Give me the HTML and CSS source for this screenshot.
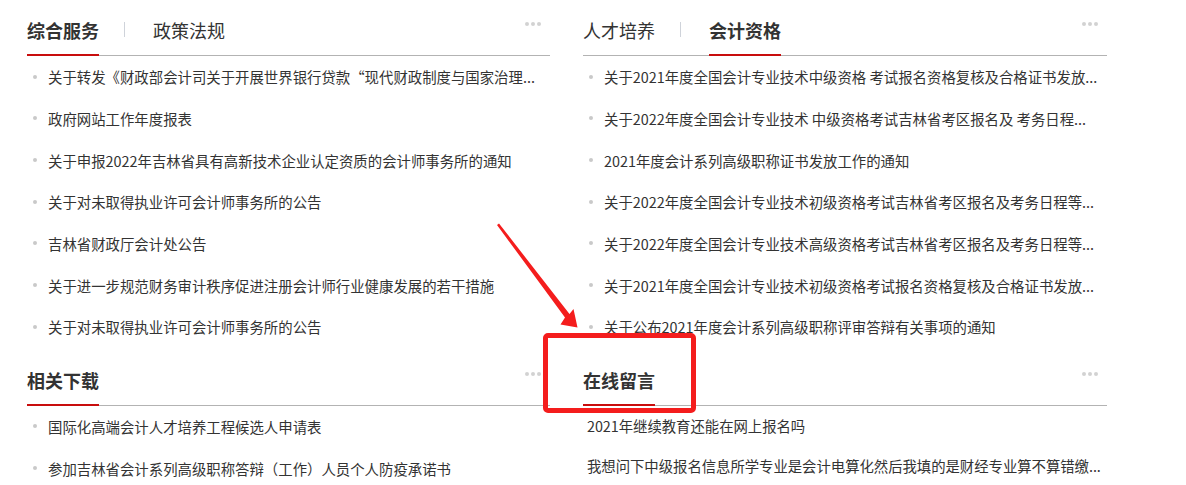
FILE: index.html
```html
<!DOCTYPE html>
<html lang="zh-CN">
<head>
<meta charset="utf-8">
<title>会计</title>
<link rel="stylesheet" href="styles.css">
</head>
<body>
<div class="page">
  <div class="grid">
    <section class="box">
      <div class="head">
        <span class="tab active">综合服务</span>
        <span class="sep"></span>
        <span class="tab">政策法规</span>
        <span class="more"><i></i><i></i><i></i></span>
      </div>
      <ul class="list">
        <li>关于转发《财政部会计司关于开展世界银行贷款“现代财政制度与国家治理...</li>
        <li>政府网站工作年度报表</li>
        <li>关于申报2022年吉林省具有高新技术企业认定资质的会计师事务所的通知</li>
        <li>关于对未取得执业许可会计师事务所的公告</li>
        <li>吉林省财政厅会计处公告</li>
        <li>关于进一步规范财务审计秩序促进注册会计师行业健康发展的若干措施</li>
        <li>关于对未取得执业许可会计师事务所的公告</li>
      </ul>
    </section>
    <section class="box">
      <div class="head">
        <span class="tab">人才培养</span>
        <span class="sep"></span>
        <span class="tab active">会计资格</span>
        <span class="more"><i></i><i></i><i></i></span>
      </div>
      <ul class="list">
        <li>关于2021年度全国会计专业技术中级资格 考试报名资格复核及合格证书发放...</li>
        <li>关于2022年度全国会计专业技术 中级资格考试吉林省考区报名及 考务日程...</li>
        <li>2021年度会计系列高级职称证书发放工作的通知</li>
        <li>关于2022年度全国会计专业技术初级资格考试吉林省考区报名及考务日程等...</li>
        <li>关于2022年度全国会计专业技术高级资格考试吉林省考区报名及考务日程等...</li>
        <li>关于2021年度全国会计专业技术初级资格考试报名资格复核及合格证书发放...</li>
        <li>关于公布2021年度会计系列高级职称评审答辩有关事项的通知</li>
      </ul>
    </section>
    <section class="box">
      <div class="head">
        <span class="tab active">相关下载</span>
        <span class="more"><i></i><i></i><i></i></span>
      </div>
      <ul class="list">
        <li>国际化高端会计人才培养工程候选人申请表</li>
        <li>参加吉林省会计系列高级职称答辩（工作）人员个人防疫承诺书</li>
      </ul>
    </section>
    <section class="box">
      <div class="head">
        <span class="tab active">在线留言</span>
        <span class="more"><i></i><i></i><i></i></span>
      </div>
      <ul class="list plain">
        <li>2021年继续教育还能在网上报名吗</li>
        <li>我想问下中级报名信息所学专业是会计电算化然后我填的是财经专业算不算错缴...</li>
      </ul>
    </section>
  </div>

  <svg class="arrow" width="1186" height="485" viewBox="0 0 1186 485" aria-hidden="true">
    <polygon points="497,225 499,223.5 569.5,314 573.5,309 577.5,327.5 560.5,324.5 565,317.5" fill="#f41d1d"/>
  </svg>
  <div class="mark"></div>
</div>
</body>
</html>
```

FILE: styles.css
```css
html, body {
  margin: 0;
  padding: 0;
  background: #fff;
}

body {
  font-family: "Noto Sans CJK SC", "Noto Sans", sans-serif;
  color: #333;
}

.page {
  position: relative;
  width: 1186px;
  height: 485px;
  overflow: hidden;
}

.grid {
  display: grid;
  grid-template-columns: 523px 524px;
  column-gap: 33px;
  row-gap: 20px;
  padding: 18px 0 0 27px;
}

.head {
  display: flex;
  align-items: flex-start;
  border-bottom: 1px solid #b3b3b3;
}

.tab {
  font-size: 18px;
  line-height: 24px;
  padding-bottom: 12px;
  border-bottom: 2px solid transparent;
  margin-bottom: -1px;
  color: #333;
  white-space: nowrap;
}

.tab.active {
  font-weight: bold;
  border-bottom-color: #c80d0d;
}

.sep {
  width: 1px;
  height: 15px;
  background: #cfd3da;
  margin: 4px 28px 0 25px;
}

.more {
  margin-left: auto;
  margin-right: 9px;
  margin-top: 4px;
  display: flex;
  gap: 2px;
}

.more i {
  display: block;
  width: 4px;
  height: 4px;
  border-radius: 50%;
  background: #d2d2d2;
}

.list {
  list-style: none;
  margin: 0;
  padding: 0 10px 0 0;
}

.list li {
  display: flex;
  align-items: center;
  height: 41.67px;
  font-size: 14.4px;
  color: #333;
  white-space: nowrap;
}

.list li::before {
  content: "";
  flex: none;
  width: 4px;
  height: 4px;
  border-radius: 50%;
  background: #c9c9c9;
  margin: 0 11px 0 6px;
}

.list.plain {
  padding-right: 0;
}

.list.plain li {
  padding-left: 4px;
  height: 41px;
  margin-top: -1px;
  letter-spacing: -0.05px;
}

.list.plain li::before {
  display: none;
}

.arrow {
  position: absolute;
  left: 0;
  top: 0;
  pointer-events: none;
}

.mark {
  position: absolute;
  left: 543px;
  top: 333px;
  width: 153px;
  height: 80px;
  box-sizing: border-box;
  border: 5px solid #f41d1d;
  border-radius: 5px;
}
```
